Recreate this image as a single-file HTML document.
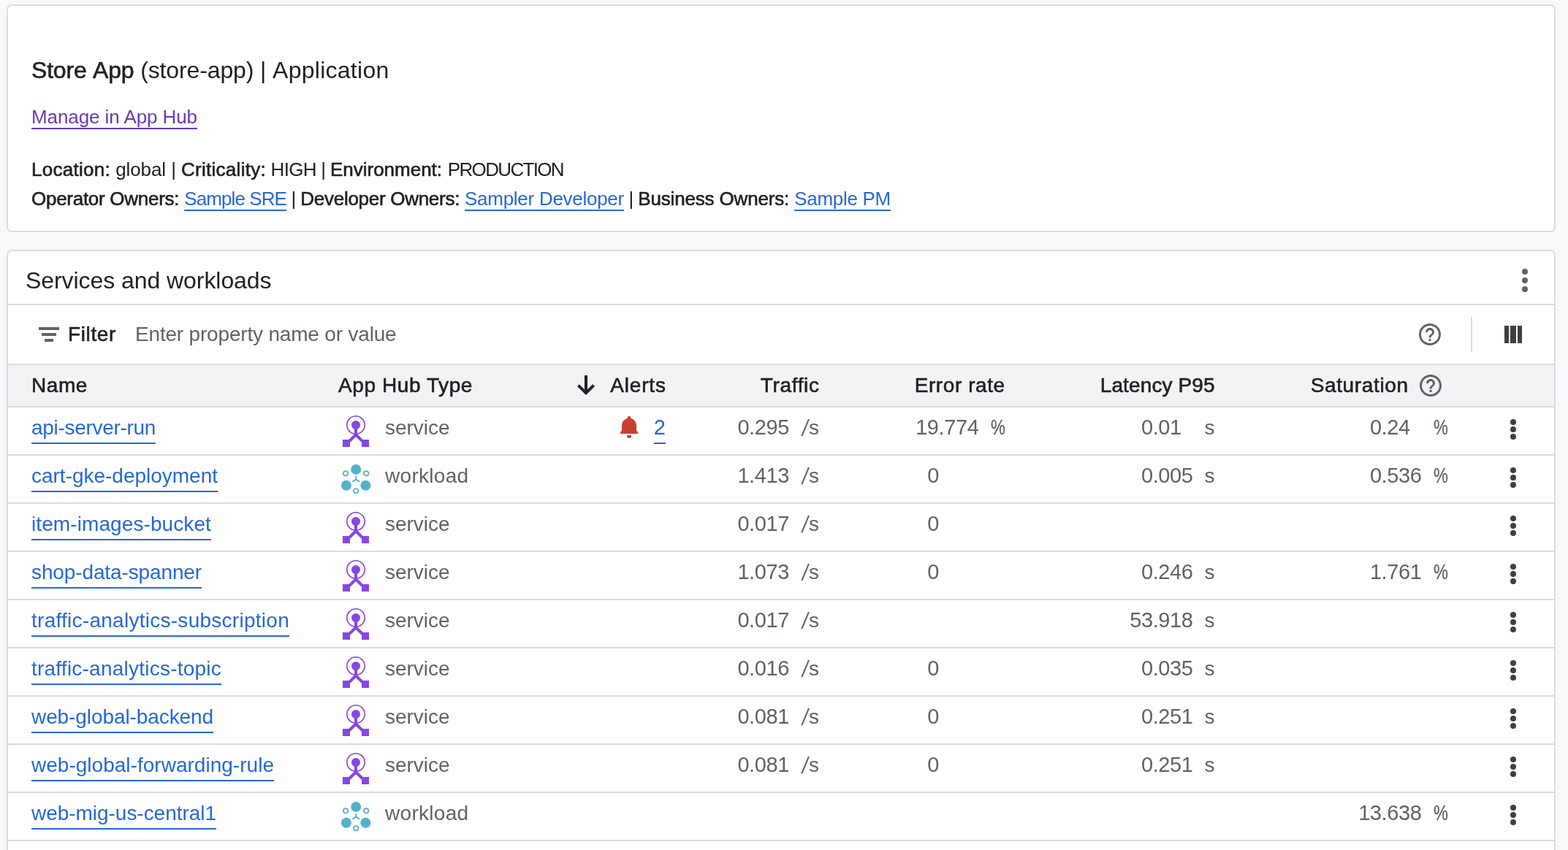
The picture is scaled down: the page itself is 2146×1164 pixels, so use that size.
<!DOCTYPE html>
<html lang="en">
<head>
<meta charset="utf-8">
<title>Store App (store-app) | Application</title>
<style>
*{box-sizing:border-box}
html,body{margin:0;padding:0;overflow:hidden}
html{width:2146px;height:1164px}
body{width:2146px;height:1164px;overflow:hidden;background:#f8f9fb;font-family:"Liberation Sans", Arial, Helvetica, sans-serif;color:#202124;-webkit-font-smoothing:antialiased}
a{color:#2468d9;text-decoration:none}
.card{will-change:transform;position:absolute;left:9px;width:2120px;background:#fff;border:2px solid #dadce0;border-radius:7px;overflow:hidden}
#info{top:6px;height:312px;color:#212121}
#svc{top:342px;height:822px;border-bottom:0;border-radius:7px 7px 0 0}
.m{font-weight:400;-webkit-text-stroke:0.6px currentColor}
h1{position:absolute;left:32px;top:68px;margin:0;font-size:32px;line-height:40px;font-weight:400;white-space:pre}
.manage{position:absolute;left:32px;top:136px;margin:0;font-size:26px;line-height:32px;white-space:pre}
.manage a{color:#673ab7}
.ul{text-decoration:underline;text-decoration-thickness:2px;text-decoration-skip-ink:none}
.meta{position:absolute;left:32px;margin:0;font-size:26px;line-height:40px;white-space:pre}
.meta a,.manage a{text-underline-offset:6px}
#l1{top:204px}
#l2{top:244px}
.hd{height:74px;border-bottom:2px solid #dadce0;position:relative}
.hd h2{position:absolute;left:24px;top:20px;margin:0;font-size:32px;line-height:40px;font-weight:400;white-space:pre}
.hd .kebab{position:absolute;left:2070px;top:22px}
.flt{height:82px;border-bottom:2px solid #dadce0;position:relative;font-size:28px;line-height:36px;white-space:pre}
.flt .ficon{position:absolute;left:38px;top:22px}
.flt .lbl{position:absolute;left:82px;top:22px}
.flt .ph{position:absolute;left:174px;top:22px;color:#5f6368}
.flt .help{position:absolute;left:1928px;top:22px}
.flt .vr{position:absolute;left:2002px;top:16px;width:2px;height:48px;background:#dadce0}
.flt .cols{position:absolute;left:2048px;top:28px}
table{border-collapse:separate;border-spacing:0;table-layout:fixed;width:2116px;font-size:28px}
th,td{padding:0;white-space:pre;overflow:visible}
thead th{height:58px;background:#f1f3f4}
thead th{border-bottom:2px solid #dadce0;font-weight:400;text-align:left;color:#202124;line-height:56px;padding-bottom:0px;vertical-align:top;position:relative}
tbody td{height:66px}
tbody td{border-bottom:2px solid #dadce0;color:#5f6368;line-height:56px;padding-bottom:0px;vertical-align:top;position:relative}
th.r,td.r{text-align:right;padding-right:32px}
th.r{padding-right:31.3px}
td.name,th.name{padding-left:32px}
td a{text-underline-offset:11px}
th.r.sat{padding-right:85.3px}
th.type{padding-left:32px}
td.type{padding-left:96px}
.ti{position:absolute;left:34px;top:10px}
.bell{position:absolute;right:64px;top:8px}
.arr{position:absolute;top:12px;left:16px}
th .help{position:absolute;top:10px;left:246px}
.n{display:inline-block;text-align:right;font-size:29px;line-height:50px;letter-spacing:-0.41px;margin-right:-0.41px}
.u{display:inline-block;text-align:left}
.c-tr .u{width:26px;margin-left:15.5px}
.c-er .u{width:20.5px;margin-left:15.5px}
.c-la .u{width:14.4px;margin-left:15.5px}
.c-sa .u{width:20.5px;margin-left:15.5px}
.sl{display:inline-block;line-height:28px;width:7.4px;transform:skewX(-10deg) scaleY(1.13);transform-origin:0 15%;margin-left:4.6px}
.pc{-webkit-text-stroke:.35px currentColor;display:inline-block;font-size:29px;line-height:50px;transform:scaleX(0.77);transform-origin:0 50%;margin-left:1px}
.c-la .u{padding-left:1px}
.two{font-size:29px;line-height:50px}
td.act .kebab{position:absolute;left:52px;top:14px}
</style>
</head>
<body>

<section class="card" id="info">
<h1><span class="m" style="letter-spacing:-0.194px;word-spacing:1.6px">Store App</span><span style="letter-spacing:-0.126px"> (store-app) | </span><span style="letter-spacing:0.268px">Application</span></h1>
<p class="manage"><a class="ul" href="#" style="letter-spacing:-0.082px">Manage in App Hub</a></p>
<p class="meta" id="l1"><span class="m" style="letter-spacing:0.274px">Location:</span><span style="letter-spacing:-0.083px"> global | </span><span class="m" style="letter-spacing:0.277px">Criticality:</span><span style="letter-spacing:-0.68px"> HIGH | </span><span class="m" style="letter-spacing:-0.016px">Environment:</span><span style="letter-spacing:-1.655px;word-spacing:2.2px"> PRODUCTION</span></p>
<p class="meta" id="l2"><span class="m" style="letter-spacing:-0.274px">Operator Owners: </span><a class="ul" href="#" style="letter-spacing:-0.904px">Sample SRE</a><span style="letter-spacing:-0.634px"> | </span><span class="m" style="letter-spacing:-0.281px">Developer Owners: </span><a class="ul" href="#" style="letter-spacing:-0.274px">Sampler Developer</a><span style="letter-spacing:-0.634px"> | </span><span class="m" style="letter-spacing:-0.162px">Business Owners: </span><a class="ul" href="#" style="letter-spacing:-0.31px">Sample PM</a></p>
</section>
<section class="card" id="svc">
<div class="hd"><h2><span style="letter-spacing:-0.065px">Services and workloads</span></h2><svg class="kebab" width="12" height="36" viewBox="0 0 12 36"><g fill="#5f6368"><circle cx="6" cy="6" r="4"/><circle cx="6" cy="18" r="4"/><circle cx="6" cy="30" r="4"/></g></svg></div>
<div class="flt"><svg class="ficon" width="36" height="36" viewBox="0 0 18 18"><path fill="#5f6368" d="M2 4h14v2H2zM4 8h10v2H4zM6 12h6v2H6z"/></svg><span class="lbl m" style="letter-spacing:0.628px">Filter</span><span class="ph" style="letter-spacing:-0.185px">Enter property name or value</span><svg class="help" width="36" height="36" viewBox="0 0 24 24"><path fill="#5f6368" d="M11 18h2v-2h-2v2zm1-16C6.48 2 2 6.48 2 12s4.48 10 10 10 10-4.48 10-10S17.52 2 12 2zm0 18c-4.41 0-8-3.59-8-8s3.59-8 8-8 8 3.59 8 8-3.59 8-8 8zm0-14c-2.21 0-4 1.79-4 4h2c0-1.1.9-2 2-2s2 .9 2 2c0 2-3 1.75-3 5h2c0-2.25 3-2.5 3-5 0-2.21-1.79-4-4-4z"/></svg><span class="vr"></span><svg class="cols" width="24" height="24" viewBox="0 0 24 24"><path fill="#3c4043" d="M0 0h6v24H0zM8 0h8v24H8zM18 0h6v24h-6z"/></svg></div>
<table>
<colgroup><col style="width:420px"><col style="width:339px"><col style="width:173px"><col style="width:210px"><col style="width:254px"><col style="width:287px"><col style="width:319px"><col style="width:114px"></colgroup>
<thead><tr><th class="name"><span class="m" style="letter-spacing:0.574px">Name</span></th><th class="type"><span class="m" style="letter-spacing:0.587px">App Hub Type</span></th><th class="r"><svg class="arr" width="32" height="32" viewBox="0 0 32 32"><path d="M16 2V26" stroke="#202124" stroke-width="4" fill="none"/><path d="M5.4 15.6L16 26.2L26.6 15.6" stroke="#202124" stroke-width="4" fill="none"/></svg><span class="m" style="letter-spacing:0.82px">Alerts</span></th><th class="r"><span class="m" style="letter-spacing:0.681px">Traffic</span></th><th class="r"><span class="m" style="letter-spacing:0.575px">Error rate</span></th><th class="r"><span class="m" style="letter-spacing:0.121px">Latency P95</span></th><th class="r sat"><span class="m" style="letter-spacing:0.636px">Saturation</span><svg class="help" width="36" height="36" viewBox="0 0 24 24"><path fill="#5f6368" d="M11 18h2v-2h-2v2zm1-16C6.48 2 2 6.48 2 12s4.48 10 10 10 10-4.48 10-10S17.52 2 12 2zm0 18c-4.41 0-8-3.59-8-8s3.59-8 8-8 8 3.59 8 8-3.59 8-8 8zm0-14c-2.21 0-4 1.79-4 4h2c0-1.1.9-2 2-2s2 .9 2 2c0 2-3 1.75-3 5h2c0-2.25 3-2.5 3-5 0-2.21-1.79-4-4-4z"/></svg></th><th></th></tr></thead>
<tbody>
<tr><td class="name"><a class="ul" href="#" style="letter-spacing:-0.306px">api-server-run</a></td><td class="type"><svg class="ti" width="44" height="48" viewBox="0 0 44 48"><circle cx="22" cy="14" r="12.2" fill="none" stroke="#8546e1" stroke-width="1.6"/><circle cx="22" cy="14" r="6" fill="#8546e1"/><path d="M22 17V28" stroke="#8546e1" stroke-width="4" fill="none"/><path d="M8.5 40.5L22 27.4L35.5 40.5" stroke="#8546e1" stroke-width="4" fill="none" stroke-linejoin="miter"/><rect x="4" y="34" width="10" height="10" fill="#8546e1"/><rect x="30" y="34" width="10" height="10" fill="#8546e1"/></svg><span style="letter-spacing:-0.016px">service</span></td><td class="r"><svg class="bell" width="36" height="36" viewBox="0 0 36 36"><path fill="#c8402f" d="M18 3.8a2.1 2.1 0 0 1 2.1 2.1v.8C24.8 7.9 28 11.8 28 17v6.5l2 2.3V28H6v-2.2l2-2.3V17c0-5.200 3.200-9.100 7.900-10.300v-.8A2.1 2.100 0 0 1 18 3.800zM14.800 30h6.400a3.200 4 0 0 1-6.400 0z"/></svg><a class="ul two" href="#">2</a></td><td class="r c-tr"><span class="n" style="padding-right:0.00px">0.295</span><span class="u"><span class="sl">/</span>s</span></td><td class="r c-er"><span class="n" style="padding-right:0.00px">19.774</span><span class="u"><span class="pc">%</span></span></td><td class="r c-la"><span class="n" style="padding-right:15.72px">0.01</span><span class="u">s</span></td><td class="r c-sa"><span class="n" style="padding-right:15.72px">0.24</span><span class="u"><span class="pc">%</span></span></td><td class="act"><svg class="kebab" width="12" height="32" viewBox="0 0 12 32"><g fill="#3c4043"><circle cx="6" cy="6" r="4"/><circle cx="6" cy="16" r="4"/><circle cx="6" cy="26" r="4"/></g></svg></td></tr>
<tr><td class="name"><a class="ul" href="#" style="letter-spacing:-0.012px">cart-gke-deployment</a></td><td class="type"><svg class="ti" width="44" height="48" viewBox="0 1 44 48"><g fill="#54b0c9"><circle cx="22.2" cy="9.9" r="7"/><circle cx="8.9" cy="31.7" r="7"/><circle cx="35.4" cy="31.7" r="7"/></g><g fill="none" stroke="#54b0c9" stroke-width="1.7"><circle cx="8.1" cy="15.3" r="3.2"/><circle cx="36.2" cy="15.3" r="3.2"/><circle cx="22.1" cy="39.2" r="3.2"/><path d="M22.2 19.2V23.4M17.3 26.8L22.2 23.4L27.1 26.6" stroke-width="1.9"/></g></svg><span style="letter-spacing:0.3px">workload</span></td><td class="r"></td><td class="r c-tr"><span class="n" style="padding-right:0.00px">1.413</span><span class="u"><span class="sl">/</span>s</span></td><td class="r c-er"><span class="n" style="padding-right:54.53px">0</span><span class="u"></span></td><td class="r c-la"><span class="n" style="padding-right:0.00px">0.005</span><span class="u">s</span></td><td class="r c-sa"><span class="n" style="padding-right:0.00px">0.536</span><span class="u"><span class="pc">%</span></span></td><td class="act"><svg class="kebab" width="12" height="32" viewBox="0 0 12 32"><g fill="#3c4043"><circle cx="6" cy="6" r="4"/><circle cx="6" cy="16" r="4"/><circle cx="6" cy="26" r="4"/></g></svg></td></tr>
<tr><td class="name"><a class="ul" href="#" style="letter-spacing:0.094px">item-images-bucket</a></td><td class="type"><svg class="ti" width="44" height="48" viewBox="0 0 44 48"><circle cx="22" cy="14" r="12.2" fill="none" stroke="#8546e1" stroke-width="1.6"/><circle cx="22" cy="14" r="6" fill="#8546e1"/><path d="M22 17V28" stroke="#8546e1" stroke-width="4" fill="none"/><path d="M8.5 40.5L22 27.4L35.5 40.5" stroke="#8546e1" stroke-width="4" fill="none" stroke-linejoin="miter"/><rect x="4" y="34" width="10" height="10" fill="#8546e1"/><rect x="30" y="34" width="10" height="10" fill="#8546e1"/></svg><span style="letter-spacing:-0.016px">service</span></td><td class="r"></td><td class="r c-tr"><span class="n" style="padding-right:0.00px">0.017</span><span class="u"><span class="sl">/</span>s</span></td><td class="r c-er"><span class="n" style="padding-right:54.53px">0</span><span class="u"></span></td><td class="r c-la"></td><td class="r c-sa"></td><td class="act"><svg class="kebab" width="12" height="32" viewBox="0 0 12 32"><g fill="#3c4043"><circle cx="6" cy="6" r="4"/><circle cx="6" cy="16" r="4"/><circle cx="6" cy="26" r="4"/></g></svg></td></tr>
<tr><td class="name"><a class="ul" href="#" style="letter-spacing:-0.12px">shop-data-spanner</a></td><td class="type"><svg class="ti" width="44" height="48" viewBox="0 0 44 48"><circle cx="22" cy="14" r="12.2" fill="none" stroke="#8546e1" stroke-width="1.6"/><circle cx="22" cy="14" r="6" fill="#8546e1"/><path d="M22 17V28" stroke="#8546e1" stroke-width="4" fill="none"/><path d="M8.5 40.5L22 27.4L35.5 40.5" stroke="#8546e1" stroke-width="4" fill="none" stroke-linejoin="miter"/><rect x="4" y="34" width="10" height="10" fill="#8546e1"/><rect x="30" y="34" width="10" height="10" fill="#8546e1"/></svg><span style="letter-spacing:-0.016px">service</span></td><td class="r"></td><td class="r c-tr"><span class="n" style="padding-right:0.00px">1.073</span><span class="u"><span class="sl">/</span>s</span></td><td class="r c-er"><span class="n" style="padding-right:54.53px">0</span><span class="u"></span></td><td class="r c-la"><span class="n" style="padding-right:0.00px">0.246</span><span class="u">s</span></td><td class="r c-sa"><span class="n" style="padding-right:0.00px">1.761</span><span class="u"><span class="pc">%</span></span></td><td class="act"><svg class="kebab" width="12" height="32" viewBox="0 0 12 32"><g fill="#3c4043"><circle cx="6" cy="6" r="4"/><circle cx="6" cy="16" r="4"/><circle cx="6" cy="26" r="4"/></g></svg></td></tr>
<tr><td class="name"><a class="ul" href="#" style="letter-spacing:0.268px">traffic-analytics-subscription</a></td><td class="type"><svg class="ti" width="44" height="48" viewBox="0 0 44 48"><circle cx="22" cy="14" r="12.2" fill="none" stroke="#8546e1" stroke-width="1.6"/><circle cx="22" cy="14" r="6" fill="#8546e1"/><path d="M22 17V28" stroke="#8546e1" stroke-width="4" fill="none"/><path d="M8.5 40.5L22 27.4L35.5 40.5" stroke="#8546e1" stroke-width="4" fill="none" stroke-linejoin="miter"/><rect x="4" y="34" width="10" height="10" fill="#8546e1"/><rect x="30" y="34" width="10" height="10" fill="#8546e1"/></svg><span style="letter-spacing:-0.016px">service</span></td><td class="r"></td><td class="r c-tr"><span class="n" style="padding-right:0.00px">0.017</span><span class="u"><span class="sl">/</span>s</span></td><td class="r c-er"></td><td class="r c-la"><span class="n" style="padding-right:0.00px">53.918</span><span class="u">s</span></td><td class="r c-sa"></td><td class="act"><svg class="kebab" width="12" height="32" viewBox="0 0 12 32"><g fill="#3c4043"><circle cx="6" cy="6" r="4"/><circle cx="6" cy="16" r="4"/><circle cx="6" cy="26" r="4"/></g></svg></td></tr>
<tr><td class="name"><a class="ul" href="#" style="letter-spacing:0.231px">traffic-analytics-topic</a></td><td class="type"><svg class="ti" width="44" height="48" viewBox="0 0 44 48"><circle cx="22" cy="14" r="12.2" fill="none" stroke="#8546e1" stroke-width="1.6"/><circle cx="22" cy="14" r="6" fill="#8546e1"/><path d="M22 17V28" stroke="#8546e1" stroke-width="4" fill="none"/><path d="M8.5 40.5L22 27.4L35.5 40.5" stroke="#8546e1" stroke-width="4" fill="none" stroke-linejoin="miter"/><rect x="4" y="34" width="10" height="10" fill="#8546e1"/><rect x="30" y="34" width="10" height="10" fill="#8546e1"/></svg><span style="letter-spacing:-0.016px">service</span></td><td class="r"></td><td class="r c-tr"><span class="n" style="padding-right:0.00px">0.016</span><span class="u"><span class="sl">/</span>s</span></td><td class="r c-er"><span class="n" style="padding-right:54.53px">0</span><span class="u"></span></td><td class="r c-la"><span class="n" style="padding-right:0.00px">0.035</span><span class="u">s</span></td><td class="r c-sa"></td><td class="act"><svg class="kebab" width="12" height="32" viewBox="0 0 12 32"><g fill="#3c4043"><circle cx="6" cy="6" r="4"/><circle cx="6" cy="16" r="4"/><circle cx="6" cy="26" r="4"/></g></svg></td></tr>
<tr><td class="name"><a class="ul" href="#" style="letter-spacing:-0.089px">web-global-backend</a></td><td class="type"><svg class="ti" width="44" height="48" viewBox="0 0 44 48"><circle cx="22" cy="14" r="12.2" fill="none" stroke="#8546e1" stroke-width="1.6"/><circle cx="22" cy="14" r="6" fill="#8546e1"/><path d="M22 17V28" stroke="#8546e1" stroke-width="4" fill="none"/><path d="M8.5 40.5L22 27.4L35.5 40.5" stroke="#8546e1" stroke-width="4" fill="none" stroke-linejoin="miter"/><rect x="4" y="34" width="10" height="10" fill="#8546e1"/><rect x="30" y="34" width="10" height="10" fill="#8546e1"/></svg><span style="letter-spacing:-0.016px">service</span></td><td class="r"></td><td class="r c-tr"><span class="n" style="padding-right:0.00px">0.081</span><span class="u"><span class="sl">/</span>s</span></td><td class="r c-er"><span class="n" style="padding-right:54.53px">0</span><span class="u"></span></td><td class="r c-la"><span class="n" style="padding-right:0.00px">0.251</span><span class="u">s</span></td><td class="r c-sa"></td><td class="act"><svg class="kebab" width="12" height="32" viewBox="0 0 12 32"><g fill="#3c4043"><circle cx="6" cy="6" r="4"/><circle cx="6" cy="16" r="4"/><circle cx="6" cy="26" r="4"/></g></svg></td></tr>
<tr><td class="name"><a class="ul" href="#" style="letter-spacing:0.019px">web-global-forwarding-rule</a></td><td class="type"><svg class="ti" width="44" height="48" viewBox="0 0 44 48"><circle cx="22" cy="14" r="12.2" fill="none" stroke="#8546e1" stroke-width="1.6"/><circle cx="22" cy="14" r="6" fill="#8546e1"/><path d="M22 17V28" stroke="#8546e1" stroke-width="4" fill="none"/><path d="M8.5 40.5L22 27.4L35.5 40.5" stroke="#8546e1" stroke-width="4" fill="none" stroke-linejoin="miter"/><rect x="4" y="34" width="10" height="10" fill="#8546e1"/><rect x="30" y="34" width="10" height="10" fill="#8546e1"/></svg><span style="letter-spacing:-0.016px">service</span></td><td class="r"></td><td class="r c-tr"><span class="n" style="padding-right:0.00px">0.081</span><span class="u"><span class="sl">/</span>s</span></td><td class="r c-er"><span class="n" style="padding-right:54.53px">0</span><span class="u"></span></td><td class="r c-la"><span class="n" style="padding-right:0.00px">0.251</span><span class="u">s</span></td><td class="r c-sa"></td><td class="act"><svg class="kebab" width="12" height="32" viewBox="0 0 12 32"><g fill="#3c4043"><circle cx="6" cy="6" r="4"/><circle cx="6" cy="16" r="4"/><circle cx="6" cy="26" r="4"/></g></svg></td></tr>
<tr><td class="name"><a class="ul" href="#" style="letter-spacing:-0.034px">web-mig-us-central1</a></td><td class="type"><svg class="ti" width="44" height="48" viewBox="0 1 44 48"><g fill="#54b0c9"><circle cx="22.2" cy="9.9" r="7"/><circle cx="8.9" cy="31.7" r="7"/><circle cx="35.4" cy="31.7" r="7"/></g><g fill="none" stroke="#54b0c9" stroke-width="1.7"><circle cx="8.1" cy="15.3" r="3.2"/><circle cx="36.2" cy="15.3" r="3.2"/><circle cx="22.1" cy="39.2" r="3.2"/><path d="M22.2 19.2V23.4M17.3 26.8L22.2 23.4L27.1 26.6" stroke-width="1.9"/></g></svg><span style="letter-spacing:0.3px">workload</span></td><td class="r"></td><td class="r c-tr"></td><td class="r c-er"></td><td class="r c-la"></td><td class="r c-sa"><span class="n" style="padding-right:0.00px">13.638</span><span class="u"><span class="pc">%</span></span></td><td class="act"><svg class="kebab" width="12" height="32" viewBox="0 0 12 32"><g fill="#3c4043"><circle cx="6" cy="6" r="4"/><circle cx="6" cy="16" r="4"/><circle cx="6" cy="26" r="4"/></g></svg></td></tr>
</tbody></table>
</section>
</body>
</html>
